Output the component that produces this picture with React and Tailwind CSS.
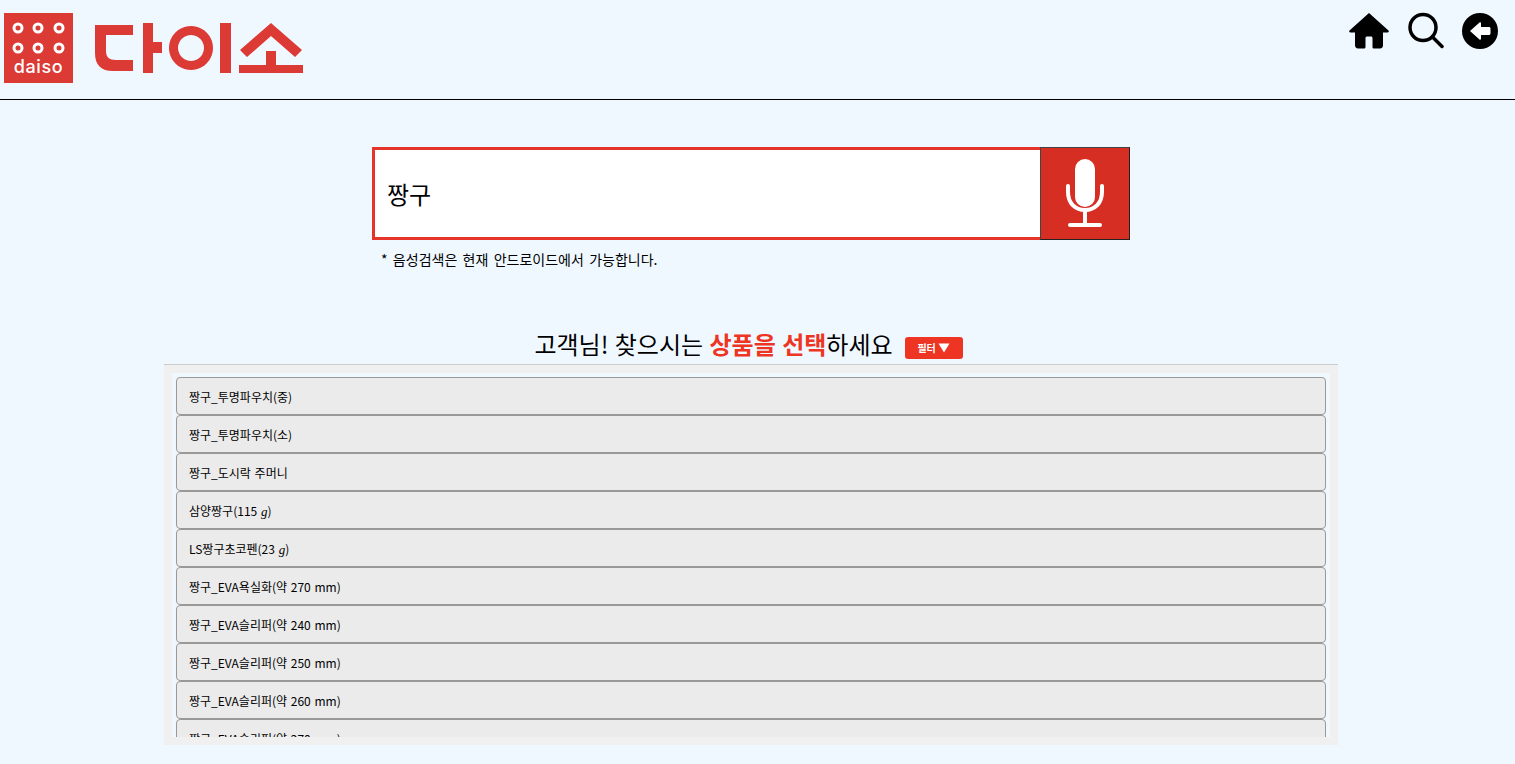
const KR = '"Noto Sans CJK KR", "Noto Sans", sans-serif';

const items = [
  ['짱구_투명파우치(중)'],
  ['짱구_투명파우치(소)'],
  ['짱구_도시락 주머니'],
  ['삼양짱구(115 ', 'g', ')'],
  ['LS짱구초코펜(23 ', 'g', ')'],
  ['짱구_EVA욕실화(약 270 mm)'],
  ['짱구_EVA슬리퍼(약 240 mm)'],
  ['짱구_EVA슬리퍼(약 250 mm)'],
  ['짱구_EVA슬리퍼(약 260 mm)'],
  ['짱구_EVA슬리퍼(약 270 mm)'],
];

function Logo() {
  return (
    <svg width="310" height="72" viewBox="0 0 310 72" className="block">
      <rect x="0" y="0" width="69" height="70" fill="#dc3a35" />
      <g fill="none" stroke="#fff" strokeWidth="3">
        {[14, 34, 55].map((x) => (
          <g key={x}>
            <circle cx={x} cy="15" r="4" />
            <circle cx={x} cy="35" r="4" />
          </g>
        ))}
      </g>
      <text x="34.500" y="60" textAnchor="middle" fill="#fff" fontSize="18" fontWeight="500" letterSpacing="0.6" fontFamily="Inter, sans-serif">daiso</text>
      <g fill="#dc3a35">
        <path d="M91 12h38v10H102v16c0 6 3 9 10 9h17v11h-20c-12 0-18-6-18-18z" />
        <path d="M139 10h10v19h9v11h-9v20h-10z" />
        <path fillRule="evenodd" d="M187 13a22 22 0 1 1-.01 0zM187 22a13 13 0 1 0 .01 0z" />
        <path d="M216 10h11v50h-11z" />
        <path d="M267 10l31 27-7 7-24-21-24 21-7-7z" />
        <path d="M262 38h10v14h27v8h-64v-8h27z" />
      </g>
    </svg>
  );
}

function Home() {
  return (
    <svg width="42" height="38" viewBox="0 0 42 38">
      <path d="M21 1L1.500 18.500c-.8 1 0 2 1 2H7V33c0 2 1.200 3.500 3 3.500h6c1 0 1.500-.7 1.500-1.500v-9c0-1 .8-1.500 1.500-1.500h4c1 0 1.500.7 1.500 1.500v9c0 1 .7 1.500 1.500 1.500h6c2 0 3-1.500 3-3.500V20.500h4.500c1 0 1.800-1 1-2z" fill="#000" />
    </svg>
  );
}

function Search() {
  return (
    <svg width="36" height="38" viewBox="0 0 36 38" fill="none" stroke="#000" strokeWidth="3.500" strokeLinecap="round">
      <circle cx="15" cy="15.500" r="13" />
      <path d="M24.500 25L34 34.500" />
    </svg>
  );
}

function Back() {
  return (
    <svg width="36" height="36" viewBox="0 0 36 36">
      <circle cx="18" cy="18" r="18" fill="#000" />
      <path d="M8 18l9.500-8.500c.6-.5 1.500 0 1.500.7V14h8c.8 0 1.500.7 1.500 1.500v5c0 .8-.7 1.500-1.500 1.500h-8v3.800c0 .8-.9 1.200-1.500.7z" fill="#fff" />
    </svg>
  );
}

function Mic() {
  return (
    <svg width="40" height="72" viewBox="0 0 40 72" fill="none">
      <rect x="10" y="2" width="20" height="48" rx="10" fill="#fff" />
      <path d="M3 29v6c0 11 7 18 17 18s17-7 17-18v-6" stroke="#fff" strokeWidth="4" strokeLinecap="round" />
      <path d="M20 53v14" stroke="#fff" strokeWidth="4" />
      <path d="M5 68h30" stroke="#fff" strokeWidth="4" strokeLinecap="round" />
    </svg>
  );
}

export default function App() {
  return (
    <div className="h-[764px] overflow-hidden bg-[#f0f8ff] text-black" style={{ fontFamily: KR }}>
      <header className="h-[100px] border-b border-black flex justify-between">
        <div className="pl-1 pt-[13px]">
          <Logo />
        </div>
        <div className="flex items-start pt-[12px] pr-[17px] gap-[18px]">
          <Home />
          <Search />
          <div className="pt-[1px]"><Back /></div>
        </div>
      </header>

      <div className="w-[758px] ml-[372px] mt-[47px] h-[93px] flex">
        <div className="flex-1 border-[3px] border-r-0 border-[#e5352b] bg-white flex items-center pl-3 pt-[1px] text-[24px] leading-none">
          짱구
        </div>
        <button className="w-[90px] h-[93px] pb-[1px] bg-[#d72e24] border border-[#444] border-r-[#222] border-b-[#222] flex items-center justify-center">
          <Mic />
        </button>
      </div>
      <p className="ml-[381px] mt-[9px] text-[14px] leading-5 [word-spacing:2.2px]">* 음성검색은 현재 안드로이드에서 가능합니다.</p>

      <div className="mt-[58px] flex justify-center items-center h-[34px] pr-[18px]">
        <h2 className="text-[24px] leading-[34px] font-normal [word-spacing:1px]">
          고객님! 찾으시는 <span className="text-[#ee3524] font-bold">상품을 선택</span>하세요
        </h2>
        <span className="ml-[12px] mt-[7px] w-[58px] h-[22px] bg-[#ee3524] rounded-[3px] text-white text-[10px] font-bold flex items-center justify-center gap-[2px]">
          필터
          <svg width="12" height="10" viewBox="0 0 12 10"><path d="M0.500 0.500h11L6 9.500z" fill="#fff" /></svg>
        </span>
      </div>

      <section className="ml-[164px] mt-[3px] w-[1174px] h-[381px] bg-[#f0f0f0] border-t border-[#ccc] pt-2 px-2">
        <div className="h-[364px] overflow-hidden bg-[#f0f8ff] px-1 pt-1">
          {items.map((t, i) => (
            <div key={i} className="h-[38px] bg-[#ebebeb] border border-[#999] rounded-[4px] pl-3 pt-[2px] flex items-center text-[12px] leading-none [word-spacing:1px]">
              <span>
                {t[0]}
                {t[1] && <span className="font-['Liberation_Serif'] italic text-[13px]">{t[1]}</span>}
                {t[2]}
              </span>
            </div>
          ))}
        </div>
      </section>
    </div>
  );
}
